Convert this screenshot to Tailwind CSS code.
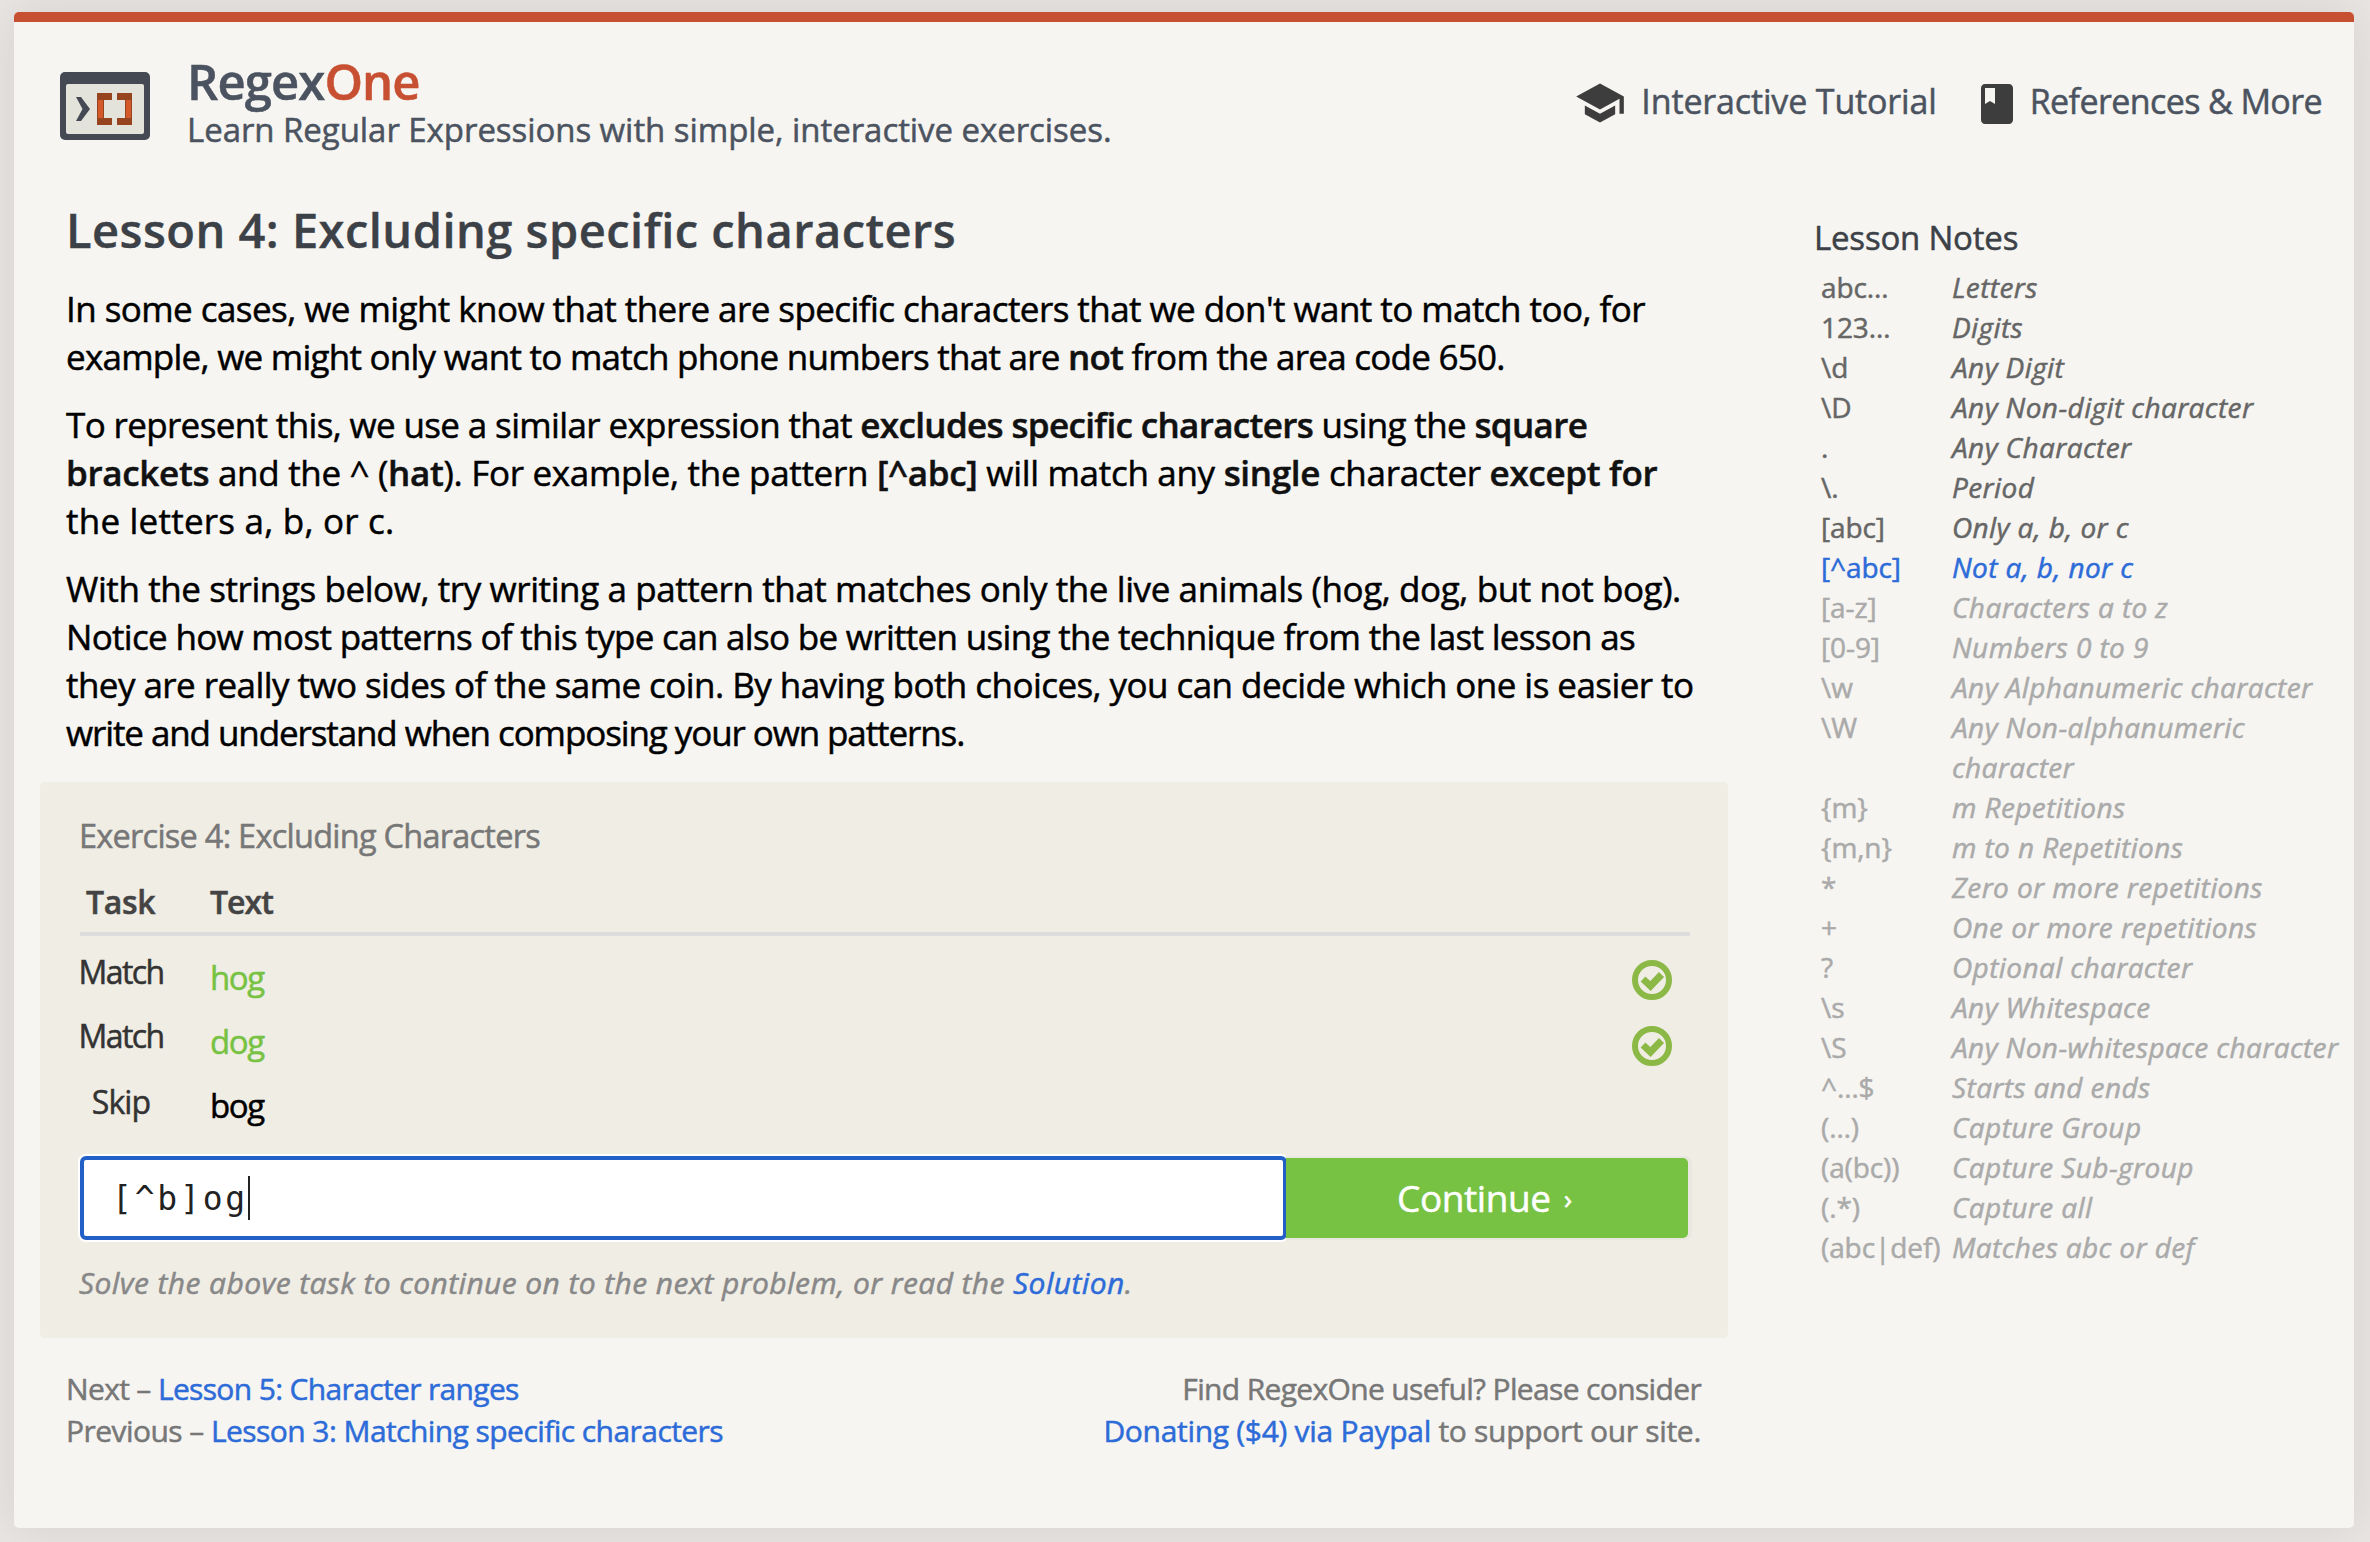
<!DOCTYPE html>
<html lang="en">
<head>
<meta charset="utf-8">
<title>RegexOne - Lesson 4: Excluding specific characters</title>
<script src="https://cdn.jsdelivr.net/npm/@tailwindcss/browser@4"></script>
</head>
<body class="h-[1542px] overflow-hidden bg-[#e9e5e2] px-[14px] pt-3 font-['Open_Sans',sans-serif] whitespace-nowrap [-webkit-text-stroke-width:0.5px]">
<div class="w-[2340px] h-[1516px] rounded-[5px] border-t-[10px] border-[#c75032] bg-[#f6f5f1] shadow-[0_0_50px_rgba(0,0,0,0.09)]">
  <header class="flex h-[180px] text-[#4b5360]">
    <svg class="ml-[46px] mt-[50px] w-[90px] h-[68px]" viewBox="0 0 90 68">
      <rect width="90" height="68" rx="5" fill="#444954"/>
      <rect x="6" y="12" width="78" height="50" rx="2" fill="#e3e3dc"/>
      <path d="M16 25h5l9 12-9 12h-5l6.500-12z" fill="#444954"/>
      <path d="M37 21h15v7h-8v18h8v7H37zM57 21h15v32H57v-7h8V28h-8z" fill="#96431f"/>
      <path d="M38 28h5v18h-5zM66 28h5v18h-5z" fill="#d4592a"/>
    </svg>
    <div class="ml-[37px] pt-[35px]">
      <div class="text-[49px] leading-[48px] font-semibold"><span class="tracking-[-0.9px]">Regex<span class="text-[#c75032]">One</span></span></div>
      <div class="mt-[5px] text-[33px] leading-10"><span class="tracking-[-0.06px]">Learn Regular Expressions with simple, interactive exercises.</span></div>
    </div>
    <nav class="ml-auto mr-[32px] flex text-[34px] leading-10">
      <a class="flex"><svg class="mt-[55px] mr-[15px] size-[52px]" viewBox="0 0 24 24" fill="#3d3d3d"><path d="M5 13.180v4L12 21l7-3.820v-4L12 17l-7-3.820zM12 3L1 9l11 6 9-4.910V17h2V9L12 3z"/></svg><span class="pt-[59px]"><span class="tracking-[-0.15px]">Interactive Tutorial</span></span></a>
      <a class="ml-[36px] flex"><svg class="mt-[58px] mr-[9px] size-12" viewBox="0 0 24 24" fill="#3d3d3d"><path d="M18 2H6c-1.100 0-2 .9-2 2v16c0 1.100.9 2 2 2h12c1.100 0 2-.9 2-2V4c0-1.100-.9-2-2-2zM6 4h5v8l-2.500-1.500L6 12V4z"/></svg><span class="pt-[59px]"><span class="tracking-[-0.6px]">References &amp; More</span></span></a>
    </nav>
  </header>
  <div class="flex">
    <main class="w-[1714px]">
      <h1 class="ml-[52px] text-[47px] leading-[56px] font-semibold text-[#3c4147] [-webkit-text-stroke-width:0.4px]"><span class="tracking-[0.48px]">Lesson 4: Excluding specific characters</span></h1>
      <div class="ml-[52px] mt-[27px] flex flex-col gap-5 text-[35px] leading-[48px] text-black [&_b]:font-semibold [&_b]:text-[#111]">
        <p><span class="tracking-[-0.56px]">In some cases, we might know that there are specific characters that we don't want to match too, for</span><br><span class="tracking-[-0.75px]">example, we might only want to match phone numbers that are <b>not</b> from the area code 650.</span></p>
        <p><span class="tracking-[-0.64px]">To represent this, we use a similar expression that <b>excludes specific characters</b> using the <b>square</b></span><br><span class="tracking-[-0.31px]"><b>brackets</b> and the ^ (<b>hat</b>). For example, the pattern <b>[^abc]</b> will match any <b>single</b> character <b>except for</b></span><br><span class="tracking-[0.22px]">the letters a, b, or c.</span></p>
        <p><span class="tracking-[-0.41px]">With the strings below, try writing a pattern that matches only the live animals (hog, dog, but not bog).</span><br><span class="tracking-[-0.69px]">Notice how most patterns of this type can also be written using the technique from the last lesson as</span><br><span class="tracking-[-0.56px]">they are really two sides of the same coin. By having both choices, you can decide which one is easier to</span><br><span class="tracking-[-1.1px]">write and understand when composing your own patterns.</span></p>
      </div>
      <section class="ml-[26px] mt-[25px] h-[556px] rounded-[5px] bg-[#f0ede5] pt-[34px] pl-10 pr-[38px] leading-10 text-[#333]">
        <h2 class="-ml-px text-[32.5px] text-[#777]"><span class="tracking-[-0.75px]">Exercise 4: Excluding Characters</span></h2>
        <div class="mt-[26px] flex border-b-4 border-[#dcdcdc] pb-[10px] text-[32px] font-semibold text-[#444]">
          <div class="w-[130px] pl-[6px]"><span class="tracking-[-0.3px]">Task</span></div><div><span class="tracking-[-1px]">Text</span></div>
        </div>
        <div class="mt-[7px] flex h-16 text-[32px]">
          <div class="-ml-[3px] w-[88px] pt-[9px] text-center"><span class="tracking-[-1.6px]">Match</span></div>
          <div class="ml-[45px] pt-[15px] text-[33px] text-[#77c242]"><span class="tracking-[-1.4px]">hog</span></div>
          <svg class="ml-auto mr-[18px] mt-[17px] size-10" viewBox="0 0 40 40" fill="none" stroke="#8cb946"><circle cx="20" cy="20" r="17" stroke-width="6"/><path d="M11 19l7.500 7L29.500 14.500" stroke-width="7"/></svg>
        </div>
        <div class="flex h-16 text-[32px]">
          <div class="-ml-[3px] w-[88px] pt-[9px] text-center"><span class="tracking-[-1.6px]">Match</span></div>
          <div class="ml-[45px] pt-[15px] text-[33px] text-[#77c242]"><span class="tracking-[-1.4px]">dog</span></div>
          <svg class="ml-auto mr-[18px] mt-[19px] size-10" viewBox="0 0 40 40" fill="none" stroke="#8cb946"><circle cx="20" cy="20" r="17" stroke-width="6"/><path d="M11 19l7.500 7L29.500 14.500" stroke-width="7"/></svg>
        </div>
        <div class="flex h-16 text-[32px]">
          <div class="-ml-[3px] w-[88px] pt-[11px] text-center"><span class="tracking-[-0.9px]">Skip</span></div>
          <div class="ml-[45px] pt-[15px] text-[33px] text-black"><span class="tracking-[-1.4px]">bog</span></div>
        </div>
        <div class="mt-[21px] flex h-[84px] items-center">
          <div class="flex h-[84px] w-[1207px] items-center rounded-[6px] border-4 border-[#2260c8] bg-white pl-[28px] shadow-[0_0_0_2px_#fff]">
            <span class="pt-[2px] font-['DejaVu_Sans_Mono',monospace] text-[33px] tracking-[2.8px] text-[#222] [-webkit-text-stroke-width:0]">[^b]og</span><span class="h-11 w-[2px] bg-[#222]"></span>
          </div>
          <div class="-ml-px relative flex h-20 w-[402px] items-center rounded-r-[5px] bg-[#77c242] pl-[111px] text-[37px] text-white shadow-[2px_0_0_2px_#e9e7df]"><span class="tracking-[-0.4px]">Continue</span><span class="ml-[13px] text-[28px]">›</span></div>
        </div>
        <p class="-ml-px mt-[23px] text-[30px] text-[#888] italic"><span class="tracking-[0.4px]">Solve the above task to continue on to the next problem, or read the <a class="text-[#2c6bd8]">Solution</a>.</span></p>
      </section>
      <footer class="ml-[52px] mr-[27px] mt-[30px] flex justify-between text-[30px] leading-[42px] text-[#777]">
        <div><span class="tracking-[-0.65px]">Next – <a class="text-[#2c6bd8]">Lesson 5: Character ranges</a></span><br><span class="tracking-[-0.56px]">Previous – <a class="text-[#2c6bd8]">Lesson 3: Matching specific characters</a></span></div>
        <div class="text-right"><span class="tracking-[-0.65px]">Find RegexOne useful? Please consider</span><br><span class="tracking-[-0.3px]"><a class="text-[#2c6bd8]">Donating ($4) via Paypal</a> to support our site.</span></div>
      </footer>
    </main>
    <aside class="ml-[86px] pt-[16px]">
      <h3 class="text-[33px] leading-10 text-[#3c4147]"><span class="tracking-[-0.2px]">Lesson Notes</span></h3>
      <div id="notes" class="ml-2 mt-[9px] grid grid-cols-[130px_auto] text-[28px] leading-10"></div>
    </aside>
  </div>
</div>
<script>
const notes = [
  ["abc…", "Letters"], ["123…", "Digits"], ["\\d", "Any Digit"], ["\\D", "Any Non-digit character"],
  [".", "Any Character"], ["\\.", "Period"], ["[abc]", "Only a, b, or c"], ["[^abc]", "Not a, b, nor c"],
  ["[a-z]", "Characters a to z"], ["[0-9]", "Numbers 0 to 9"], ["\\w", "Any Alphanumeric character"],
  ["\\W", "Any Non-alphanumeric<br>character"], ["{m}", "m Repetitions"], ["{m,n}", "m to n Repetitions"],
  ["*", "Zero or more repetitions"], ["+", "One or more repetitions"], ["?", "Optional character"],
  ["\\s", "Any Whitespace"], ["\\S", "Any Non-whitespace character"], ["^…$", "Starts and ends"],
  ["(…)", "Capture Group"], ["(a(bc))", "Capture Sub-group"], ["(.*)", "Capture all"], ["(abc|def)", "Matches abc or def"]
];
// Lessons already covered are dark, the current one is blue, upcoming ones are faded.
document.getElementById("notes").innerHTML = notes.map(([code, text], i) => {
  const color = i < 7 ? "text-[#666]" : i === 7 ? "text-[#2c6bd8]" : "text-[#aaa]";
  return `<div class="${color} -ml-px tracking-[-0.1px]">${code}</div><div class="${color} italic tracking-[0.4px]">${text}</div>`;
}).join("");
</script>
</body>
</html>
